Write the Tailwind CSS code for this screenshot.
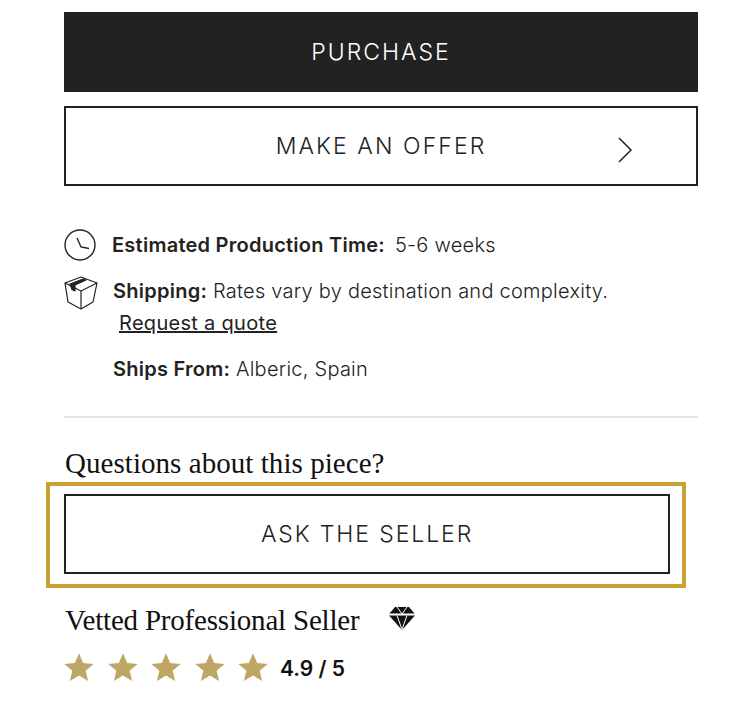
<!DOCTYPE html>
<html lang="en">
<head>
  <meta charset="UTF-8" />
  <title>Purchase</title>
  <script src="https://cdn.jsdelivr.net/npm/@tailwindcss/browser@4"></script>
</head>
<body class="bg-white h-[716px] overflow-hidden font-['Inter','Noto_Sans',sans-serif] text-[#222]">
  <div class="pt-3 pl-[64px] w-[698px]">
    <button class="block w-full h-[80px] bg-[#222] text-white text-[23px] font-light tracking-[2px]">PURCHASE</button>
    <button class="relative block w-full h-[80px] mt-[14px] border-2 border-[#222] text-[23px] font-light tracking-[2.1px]">
      MAKE AN OFFER
      <svg class="absolute left-[551px] top-[29px]" width="16" height="26" viewBox="0 0 16 26" fill="none" stroke="#222" stroke-width="1.5"><path d="M2 1l12 12L2 25" /></svg>
    </button>

    <div class="flex items-center h-[32px] mt-[43px] text-[20px] tracking-[0.25px]">
      <svg width="32" height="32" viewBox="0 0 32 32" fill="none" stroke="#222" stroke-width="1.4"><circle cx="16" cy="16" r="15" /><path d="M13 9l4 9 8 1.500" /></svg>
      <span class="ml-[16px] font-semibold">Estimated Production Time:</span>
      <span class="ml-[10px] font-light">5-6 weeks</span>
    </div>

    <div class="flex mt-[15px] text-[20px] tracking-[0.25px] font-light">
      <svg class="shrink-0" width="35" height="34" viewBox="0 0 35 34" fill="none" stroke="#222" stroke-width="1.2" stroke-linejoin="round">
        <path d="M1 7L17 1l16 6-4 19-12 7-13-7z" />
        <path d="M1 7l16 8 16-8M17 15v18" />
        <path d="M6 8l13-5 3 1-11 5v6l-3-1.500z" fill="#222" />
      </svg>
      <div class="ml-[14px] -mt-[1px] leading-[32px]">
        <p><b class="font-semibold">Shipping:</b> Rates vary by destination and complexity.</p>
        <a class="ml-[6px] underline font-normal tracking-[0.3px]">Request a quote</a>
        <p class="mt-[14px]"><b class="font-semibold">Ships From:</b> Alberic, Spain</p>
      </div>
    </div>

    <hr class="mt-[31px] border-t-2 border-[#e2e2e2]" />

    <h2 class="mt-[27px] ml-[1px] font-['Liberation_Serif',serif] text-[29px] leading-[36px] text-[#111] tracking-[0.05px]">Questions about this piece?</h2>
  </div>

  <div class="ml-[46px] mt-[1px] w-[640px] h-[106px] border-4 border-[#c9a032] pt-[8px] pl-[14px] pr-[12px]">
    <button class="block w-full h-[80px] border-2 border-[#222] text-[23px] font-light tracking-[1.9px]">ASK THE SELLER</button>
  </div>

  <div class="pl-[64px]">
    <div class="flex items-center mt-[15px] h-[36px]">
      <h3 class="ml-[1px] font-['Liberation_Serif',serif] text-[29px] text-[#111] tracking-[-0.2px]">Vetted Professional Seller</h3>
      <svg class="ml-[30px] mb-[6px]" width="26" height="24" viewBox="0 0 26 24" fill="#111"><path d="M6 1h14l6 7H0z" /><path d="M0 9.500h26L13 24z" /><path d="M8 1l5 7 5-7M0 8h26M8 9.500l5 14 5-14" stroke="#fff" stroke-width="1" fill="none" /></svg>
    </div>
    <div class="flex items-center mt-[12px] h-[32px]">
      <div class="flex gap-[13.500px]">
        <svg width="30" height="30" viewBox="0 0 24 24" fill="#bea664"><path d="M12 1l3.300 7.800 8.400.7-6.400 5.500 2 8.200-7.300-4.400-7.300 4.400 2-8.200L.3 9.500l8.400-.7z" /></svg>
        <svg width="30" height="30" viewBox="0 0 24 24" fill="#bea664"><path d="M12 1l3.300 7.800 8.400.7-6.400 5.500 2 8.200-7.300-4.400-7.300 4.400 2-8.200L.3 9.500l8.400-.7z" /></svg>
        <svg width="30" height="30" viewBox="0 0 24 24" fill="#bea664"><path d="M12 1l3.300 7.800 8.400.7-6.400 5.500 2 8.200-7.300-4.400-7.300 4.400 2-8.200L.3 9.500l8.400-.7z" /></svg>
        <svg width="30" height="30" viewBox="0 0 24 24" fill="#bea664"><path d="M12 1l3.300 7.800 8.400.7-6.400 5.500 2 8.200-7.300-4.400-7.300 4.400 2-8.200L.3 9.500l8.400-.7z" /></svg>
        <svg width="30" height="30" viewBox="0 0 24 24" fill="#bea664"><path d="M12 1l3.300 7.800 8.400.7-6.400 5.500 2 8.200-7.300-4.400-7.300 4.400 2-8.200L.3 9.500l8.400-.7z" /></svg>
      </div>
      <span class="ml-[12px] mt-[3px] text-[21px] font-semibold text-[#111]">4.9 / 5</span>
    </div>
  </div>
</body>
</html>
